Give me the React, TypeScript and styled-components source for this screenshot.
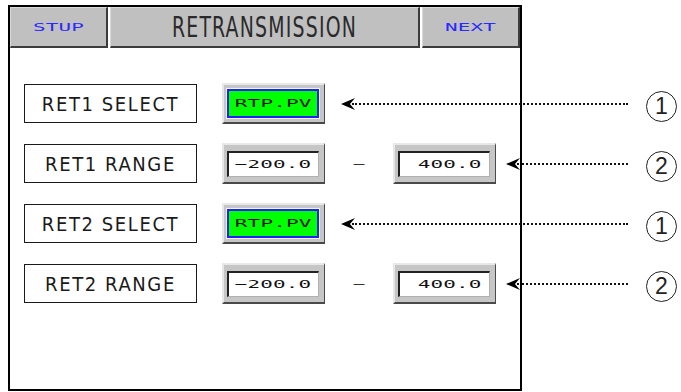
import React from "react";
import styled, { createGlobalStyle } from "styled-components";

const GlobalStyle = createGlobalStyle`
  html, body {
    margin: 0;
    padding: 0;
    background: #fff;
  }
  body {
    width: 681px;
    height: 392px;
    overflow: hidden;
    font-family: "DejaVu Sans", sans-serif;
  }
`;

const Screen = styled.div`
  margin: 5px 0 0 8px;
  width: 514px;
  height: 386px;
  box-sizing: border-box;
  border: 2px solid #000;
  display: flex;
  flex-direction: column;
`;

const Header = styled.div`
  display: flex;
  gap: 2px;
  height: 41px;
`;

const HeaderButton = styled.div<{ $wide?: boolean }>`
  flex: ${(p) => (p.$wide ? "0 0 310px" : "0 0 98px")};
  box-sizing: border-box;
  background: #c0c0c0;
  border-top: 1px solid #d8d8d8;
  border-left: 1px solid #d8d8d8;
  border-right: 2px solid #3c3c3c;
  border-bottom: 2px solid #3c3c3c;
  display: flex;
  align-items: center;
  justify-content: center;
`;

const Title = styled.span`
  display: inline-block;
  font-family: "Liberation Sans Narrow", "DejaVu Sans Condensed", sans-serif;
  font-size: 21px;
  line-height: 1;
  letter-spacing: 1.2px;
  color: #2a2a2a;
  transform: scaleY(1.39);
`;

// wide pixel-ish lettering used by the touch keys and value boxes
const PixelText = styled.span<{ $color?: string; $origin?: string }>`
  display: inline-block;
  font-family: "DejaVu Sans Mono", monospace;
  font-size: 11px;
  line-height: 1;
  letter-spacing: 0.1px;
  color: ${(p) => p.$color ?? "#111"};
  transform: scaleX(1.9);
  transform-origin: ${(p) => p.$origin ?? "center"};
`;

const Body = styled.div`
  display: flex;
  flex-direction: column;
  gap: 19px;
  padding: 35px 0 0 14px;
`;

const Row = styled.div`
  display: flex;
  align-items: center;
  height: 41px;
  margin-right: -161px;
`;

const Label = styled.div`
  box-sizing: border-box;
  flex: 0 0 173px;
  height: 39px;
  border: 1px solid #1a1a1a;
  display: flex;
  align-items: center;
  justify-content: center;
  font-family: "Liberation Sans Narrow", "DejaVu Sans Condensed", sans-serif;
  font-size: 20px;
  letter-spacing: 1.6px;
  color: #1a1a1a;
  white-space: pre;
  margin-right: 25px;
`;

const Field = styled.div`
  box-sizing: border-box;
  flex: 0 0 103px;
  height: 41px;
  background: #c6c6c6;
  border-top: 2px solid #e8e8e8;
  border-left: 2px solid #e8e8e8;
  border-right: 1px solid #4a4a4a;
  border-bottom: 2px solid #4a4a4a;
  padding: 0 5px 0 3px;
  display: flex;
  align-items: center;
`;

const SelectValue = styled.div`
  flex: 1;
  height: 29px;
  box-sizing: border-box;
  background: #00ff00;
  border: 2px solid #2020ff;
  outline: 1px solid #f4f4f4;
  display: flex;
  align-items: center;
  justify-content: center;
`;

const NumberValue = styled.div`
  flex: 1;
  height: 26px;
  box-sizing: border-box;
  background: #fff;
  border-top: 2px solid #222;
  border-left: 2px solid #222;
  border-right: 1px solid #b0b0b0;
  border-bottom: 1px solid #b0b0b0;
  padding-right: 7px;
  display: flex;
  align-items: center;
  justify-content: flex-end;
`;

const RangeDash = styled.span`
  margin: 0 28px;
  font-family: "DejaVu Sans", sans-serif;
  font-size: 12px;
  color: #333;
`;

const Callout = styled.div<{ $gap: number }>`
  flex: 1;
  display: flex;
  align-items: center;
  margin-left: ${(p) => p.$gap}px;
`;

const Leader = styled.div`
  flex: 1;
  margin-left: -3px;
  margin-right: 18px;
  border-top: 2px dotted #111;
`;

const Marker = styled.div`
  flex: 0 0 31px;
  height: 31px;
  margin: 5px 4px 0 0;
  box-sizing: border-box;
  border: 1px solid #222;
  border-radius: 50%;
  display: flex;
  align-items: center;
  justify-content: center;
  font-family: "Liberation Sans", sans-serif;
  font-size: 23px;
  color: #222;
`;

const Arrowhead = () => (
  <svg width="14" height="12" viewBox="0 0 14 12">
    <path d="M0 6 L14 0 L9 6 L14 12 Z" fill="#000" />
  </svg>
);

type CalloutProps = { gap: number; mark: number };

const Note: React.FC<CalloutProps> = ({ gap, mark }) => (
  <Callout $gap={gap}>
    <Arrowhead />
    <Leader />
    <Marker>{mark}</Marker>
  </Callout>
);

const channels = [
  { id: 1, source: "RTP.PV", low: "−200.0", high: "400.0" },
  { id: 2, source: "RTP.PV", low: "−200.0", high: "400.0" },
];

export default function App() {
  return (
    <>
      <GlobalStyle />
      <Screen>
        <Header>
          <HeaderButton>
            <PixelText $color="#2a2aff">STUP</PixelText>
          </HeaderButton>
          <HeaderButton $wide>
            <Title>RETRANSMISSION</Title>
          </HeaderButton>
          <HeaderButton>
            <PixelText $color="#2a2aff">NEXT</PixelText>
          </HeaderButton>
        </Header>
        <Body>
          {channels.map((ch) => (
            <React.Fragment key={ch.id}>
              <Row>
                <Label>{`RET${ch.id} SELECT`}</Label>
                <Field>
                  <SelectValue>
                    <PixelText>{ch.source}</PixelText>
                  </SelectValue>
                </Field>
                <Note gap={16} mark={1} />
              </Row>
              <Row>
                <Label>{`RET${ch.id} RANGE`}</Label>
                <Field>
                  <NumberValue>
                    <PixelText $origin="right">{ch.low}</PixelText>
                  </NumberValue>
                </Field>
                <RangeDash>—</RangeDash>
                <Field>
                  <NumberValue>
                    <PixelText $origin="right">{ch.high}</PixelText>
                  </NumberValue>
                </Field>
                <Note gap={10} mark={2} />
              </Row>
            </React.Fragment>
          ))}
        </Body>
      </Screen>
    </>
  );
}
